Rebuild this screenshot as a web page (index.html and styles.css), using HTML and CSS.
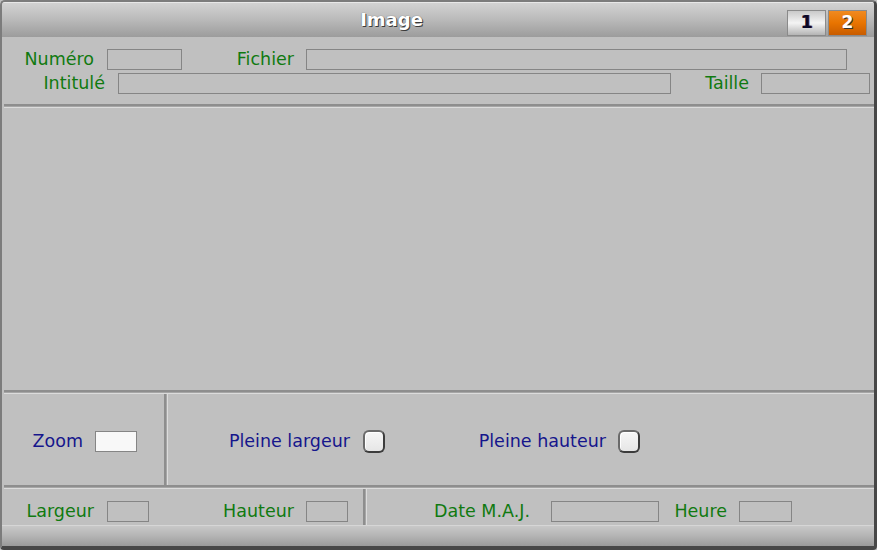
FILE: index.html
```html
<!DOCTYPE html>
<html lang="fr">
<head>
<meta charset="utf-8">
<title>Image</title>
<link rel="stylesheet" href="styles.css">
</head>
<body>
<div class="window">
  <div class="titlebar">
    <div class="title">Image</div>
    <div class="tabs">
      <div class="tab tab-grey">1</div>
      <div class="tab tab-orange">2</div>
    </div>
  </div>

  <div class="fields">
    <div class="row">
      <span class="lbl green w-numero">Numéro</span>
      <span class="box w75 ml13"></span>
      <span class="lbl green w-fichier">Fichier</span>
      <span class="box w541 ml12"></span>
    </div>
    <div class="row">
      <span class="lbl green w-intitule">Intitulé</span>
      <span class="box w553 ml13"></span>
      <span class="lbl green w-taille">Taille</span>
      <span class="box w109 ml12"></span>
    </div>
  </div>

  <div class="hsep"></div>
  <div class="picture"></div>
  <div class="hsep"></div>

  <div class="zoomrow">
    <div class="cell cell-zoom">
      <span class="lbl blue w-zoom">Zoom</span>
      <span class="box box-white w42 ml12"></span>
    </div>
    <div class="vsep"></div>
    <div class="cell cell-options">
      <span class="lbl blue w-plarg">Pleine largeur</span>
      <span class="check ml13"></span>
      <span class="lbl blue w-phaut">Pleine hauteur</span>
      <span class="check ml12"></span>
    </div>
  </div>

  <div class="hsep"></div>

  <div class="inforow">
    <div class="cell cell-size">
      <span class="lbl green w-largeur">Largeur</span>
      <span class="box w42 ml13"></span>
      <span class="lbl green w-hauteur">Hauteur</span>
      <span class="box w42 ml12"></span>
    </div>
    <div class="vsep"></div>
    <div class="cell cell-date">
      <span class="lbl green w-date">Date M.A.J.</span>
      <span class="box w108 ml21"></span>
      <span class="lbl green w-heure">Heure</span>
      <span class="box w53 ml12"></span>
    </div>
  </div>

  <div class="statusbar"></div>
</div>
</body>
</html>
```

FILE: styles.css
```css
* { box-sizing: border-box; }

html, body {
  margin: 0;
  padding: 0;
  background: #c0c0c0;
}

body {
  font-family: "DejaVu Sans", Verdana, sans-serif;
  font-size: 17.5px;
}

.window {
  width: 877px;
  height: 550px;
  background: #c0c0c0;
  border-top: 2px solid #7c7c7c;
  border-left: 2px solid #7c7c7c;
  border-right: 3px solid #474747;
  border-bottom: 4px solid #474747;
  border-radius: 5px 5px 4px 4px;
  display: flex;
  flex-direction: column;
  overflow: hidden;
}

/* Title bar */
.titlebar {
  height: 35px;
  flex: none;
  display: flex;
  align-items: flex-start;
  padding: 7px 7px 0 0;
  background: linear-gradient(#d2d2d2, #bcbcbc 45%, #9c9c9c);
  border-top: 1px solid #e8e8e8;
}

.title {
  flex: 1;
  text-align: center;
  color: #ffffff;
  font-weight: bold;
  font-size: 18px;
  line-height: 22px;
  margin-top: -1px;
  padding-right: 6px;
  text-shadow: 1px 1px 0 #3a3a3a, 0 0 1px #555;
}

.tabs {
  display: flex;
  gap: 2px;
}

.tab {
  width: 39px;
  height: 26px;
  font-weight: bold;
  font-size: 17px;
  line-height: 23px;
  text-align: center;
  font-family: "DejaVu Sans", Verdana, sans-serif;
}

.tab-grey {
  border: 1px solid #8a8a8a;
  background: linear-gradient(#c9c9c9, #f4f4f4 50%, #b4b4b4);
  color: #08082a;
  text-shadow: 1px 0 0 #6a2a3a;
}

.tab-orange {
  border: 1px solid #8a8a8a;
  background: linear-gradient(#f08a20, #e87400 50%, #c85c00);
  color: #ffffff;
  text-shadow: 1px 1px 0 #333;
}

/* Fields */
.fields {
  height: 67px;
  flex: none;
  padding-top: 12px;
  display: flex;
  flex-direction: column;
  gap: 3px;
}

.row {
  display: flex;
  align-items: center;
  height: 21px;
}

.lbl {
  flex: none;
  text-align: right;
  white-space: nowrap;
  line-height: 21px;
}

.green { color: #107a10; }
.blue { color: #16168c; }

.box {
  flex: none;
  display: block;
  height: 21px;
  border: 1px solid #858585;
}

.box-white { background: #f8f8f8; }

.w42 { width: 42px; }
.w53 { width: 53px; }
.w75 { width: 75px; }
.w108 { width: 108px; }
.w109 { width: 109px; }
.w541 { width: 541px; }
.w553 { width: 553px; }

.ml12 { margin-left: 12px; }
.ml13 { margin-left: 13px; }
.ml21 { margin-left: 21px; }

.w-numero { width: 92px; }
.w-fichier { width: 112px; }
.w-intitule { width: 103px; }
.w-taille { width: 78px; }

/* Separators */
.hsep {
  flex: none;
  height: 4px;
  margin: 0 0 0 2px;
  border-top: 2px solid #8e8e8e;
  background: #a6a6a6;
  border-bottom: 1px solid #dcdcdc;
}

.vsep {
  flex: none;
  width: 4px;
  border-left: 2px solid #8e8e8e;
  background: #a6a6a6;
  border-right: 1px solid #dcdcdc;
}

.picture {
  flex: none;
  height: 282px;
}

/* Zoom row */
.zoomrow {
  flex: none;
  height: 91px;
  display: flex;
  padding-left: 2px;
}

.cell {
  display: flex;
  align-items: center;
}

.zoomrow .cell {
  padding-top: 3px;
}

.cell-zoom { width: 160px; }
.cell-options { flex: 1; }

.w-zoom { width: 79px; }
.w-plarg { width: 182px; }
.w-phaut { width: 221px; }

.check {
  flex: none;
  display: block;
  width: 22px;
  height: 23px;
  border-radius: 6px;
  background: linear-gradient(#f6f6f6, #e6e6e6);
  border: 2px solid #6a6a6a;
  border-right-color: #3c3c3c;
  border-bottom-color: #3c3c3c;
  box-shadow: inset 1px 1px 0 #ffffff;
}

/* Info row */
.inforow {
  flex: none;
  height: 36px;
  display: flex;
  padding-left: 2px;
}

.inforow .cell {
  align-items: flex-start;
  padding-top: 12px;
}

.cell-size { width: 359px; }
.cell-date { flex: 1; }

.w-largeur { width: 90px; }
.w-hauteur { width: 145px; }
.w-date { width: 163px; }
.w-heure { width: 68px; }

/* Status bar */
.statusbar {
  flex: 1;
  border-top: 1px solid #d6d6d6;
  background: linear-gradient(#c8c8c8, #b4b4b4 50%, #9a9a9a);
}
```
